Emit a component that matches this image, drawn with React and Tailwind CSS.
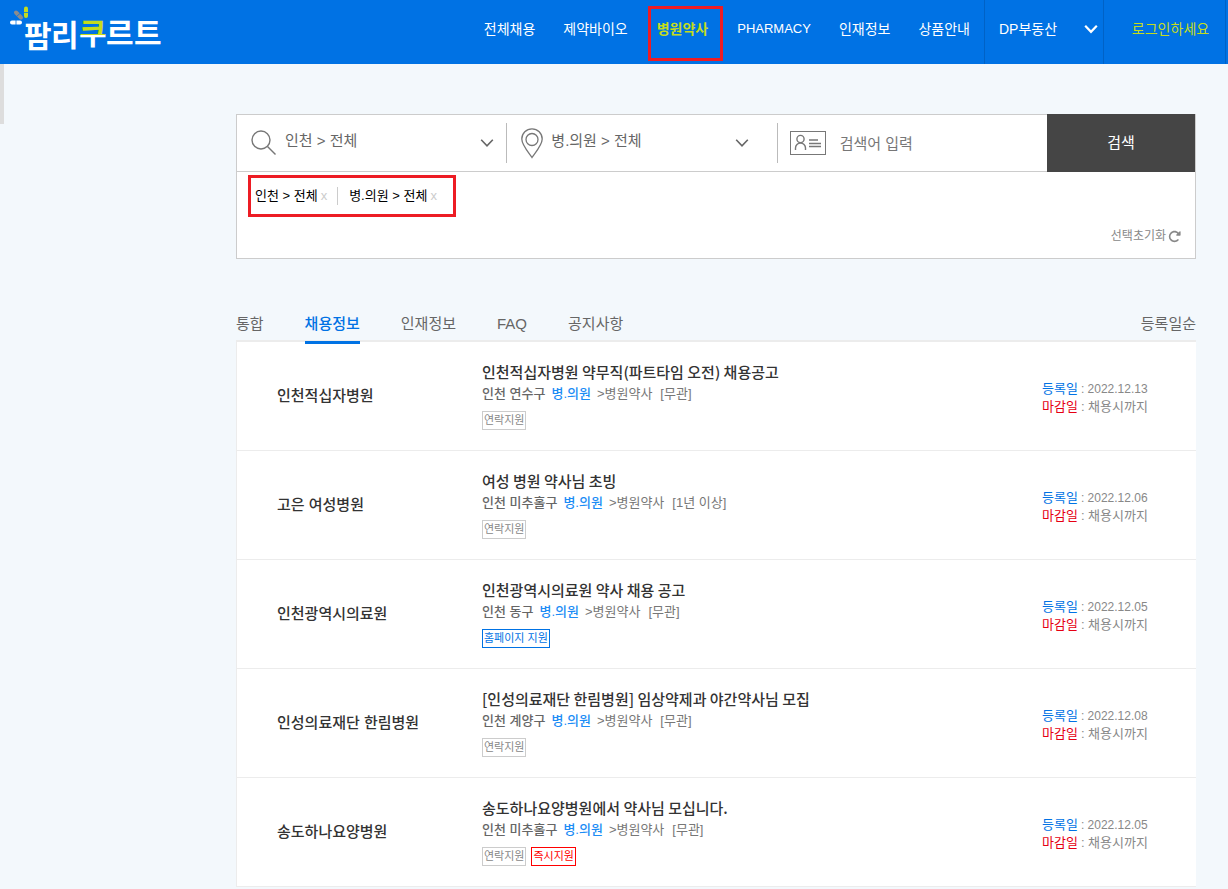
import { useState } from "react";
import { FaRotateRight } from "react-icons/fa6";

const menus = ["전체채용", "제약바이오", "병원약사", "PHARMACY", "인재정보", "상품안내"];

const tabs = ["통합", "채용정보", "인재정보", "FAQ", "공지사항"];

const jobs = [
  {
    company: "인천적십자병원",
    title: "인천적십자병원 약무직(파트타임 오전) 채용공고",
    area: "인천 연수구",
    career: "[무관]",
    badges: ["연락지원"],
    date: "2022.12.13",
  },
  {
    company: "고은 여성병원",
    title: "여성 병원 약사님 초빙",
    area: "인천 미추홀구",
    career: "[1년 이상]",
    badges: ["연락지원"],
    date: "2022.12.06",
  },
  {
    company: "인천광역시의료원",
    title: "인천광역시의료원 약사 채용 공고",
    area: "인천 동구",
    career: "[무관]",
    badges: ["홈페이지 지원"],
    date: "2022.12.05",
  },
  {
    company: "인성의료재단 한림병원",
    title: "[인성의료재단 한림병원] 임상약제과 야간약사님 모집",
    area: "인천 계양구",
    career: "[무관]",
    badges: ["연락지원"],
    date: "2022.12.08",
  },
  {
    company: "송도하나요양병원",
    title: "송도하나요양병원에서 약사님 모십니다.",
    area: "인천 미추홀구",
    career: "[무관]",
    badges: ["연락지원", "즉시지원"],
    date: "2022.12.05",
  },
];

const badgeColors = {
  연락지원: "border-[#ccc] text-[#888]",
  "홈페이지 지원": "border-[#0072e4] text-[#0072e4]",
  즉시지원: "border-[#f00] text-[#f00]",
};

const Chevron = ({ className, strokeWidth = 1.6 }) => (
  <svg className={className} width="14" height="10" viewBox="0 0 14 10" fill="none" stroke="currentColor" strokeWidth={strokeWidth}>
    <path d="M1.2 1.8 7 7.8l5.8-6" />
  </svg>
);

const Logo = () => (
  <svg className="overflow-visible" width="156" height="64" viewBox="0 0 156 64" aria-label="팜리쿠르트">
    <defs>
      <linearGradient id="ku" gradientUnits="userSpaceOnUse" x1="0" y1="0" x2="0" y2="50">
        <stop offset="0.69" stopColor="#c4dc1c" />
        <stop offset="0.69" stopColor="#fff" />
      </linearGradient>
    </defs>
    {/* capsules */}
    <g strokeLinecap="round" strokeWidth="4">
      <path d="M2 22.5h8" stroke="#fff" />
      <path d="m6 12.500 5 5" stroke="#8c8c8c" />
      <path d="M16 8.500v7.500" stroke="#c4dc1c" />
    </g>
    <path d="M6 20v5M13.500 12.500h5M6.500 16.500l4-3.500" stroke="#0072e4" strokeWidth="0.8" />
    <g fontSize="30" fontWeight="700" fill="#fff" fontFamily="'Noto Sans CJK KR', sans-serif">
      <text x="14" y="47">팜</text>
      <text x="41" y="46">리</text>
      <text x="69" y="44" fill="url(#ku)">쿠</text>
      <text x="96" y="44">르</text>
      <text x="124" y="44">트</text>
    </g>
  </svg>
);

const Header = () => (
  <header className="flex h-16 items-stretch bg-[#0072e4] text-sm text-white">
    <a href="#" className="ml-[10px] shrink-0">
      <Logo />
    </a>
    <nav className="ml-auto flex">
      {menus.map((menu) =>
        menu === "병원약사" ? (
          <a key={menu} href="#" className="relative flex items-center px-[15px] pb-[6px] font-bold text-[#c4dc1c]">
            {menu}
            <span className="absolute top-[6px] right-0 bottom-[3px] left-[6px] border-3 border-[#ed1c24]" />
          </a>
        ) : (
          <a key={menu} href="#" className={`flex items-center px-[14px] pb-[6px] ${menu === "PHARMACY" ? "text-[13px]" : ""}`}>
            {menu}
          </a>
        )
      )}
    </nav>
    <button className="flex w-[120px] items-center justify-between border-x border-[#0062c6] pr-[5px] pb-[6px] pl-[14px]">
      DP부동산
      <Chevron strokeWidth={2.2} />
    </button>
    <a href="#" className="mr-0.5 flex w-[122px] items-center justify-center border-r border-[#0062c6] pb-[6px] pl-3 text-[#c4dc1c]">
      로그인하세요
    </a>
  </header>
);

const SearchBox = () => {
  const [keyword, setKeyword] = useState("");

  return (
    <form className="border border-[#ccc] bg-white" onSubmit={(e) => e.preventDefault()}>
      <div className="flex h-[57px] items-stretch border-b border-[#ccc] text-[15px] text-[#666]">
        <label className="relative my-2 flex flex-1 items-center border-r border-[#bbb]">
          <svg className="ml-[14px] shrink-0" width="26" height="26" viewBox="0 0 26 26" fill="none" stroke="#777" strokeWidth="1.4">
            <circle cx="10" cy="10" r="9" />
            <path d="m16.500 16.500 8 8" />
          </svg>
          <select aria-label="지역" className="h-full w-full appearance-none pb-1 pl-2 outline-none">
            <option>인천 &gt; 전체</option>
          </select>
          <Chevron className="pointer-events-none absolute right-3" />
        </label>
        <label className="relative my-2 flex flex-1 items-center border-r border-[#bbb]">
          <svg className="ml-[14px] shrink-0" width="22" height="32" viewBox="0 0 22 32" fill="none" stroke="#777" strokeWidth="1.3">
            <path d="M11 30.500C8 26 .8 18 .8 12a10.200 10.200 0 0 1 20.400 0c0 6-7.200 14-10.200 18.500Z" />
            <circle cx="11" cy="12.500" r="6" />
          </svg>
          <select aria-label="분류" className="h-full w-full appearance-none pb-1 pl-2 outline-none">
            <option>병.의원 &gt; 전체</option>
          </select>
          <Chevron className="pointer-events-none absolute right-7" />
        </label>
        <label className="flex flex-1 items-center">
          <svg className="ml-3 shrink-0" width="36" height="24" viewBox="0 0 36 24" fill="none" stroke="#777">
            <rect x="0.5" y="0.5" width="35" height="23" />
            <g strokeWidth="1.4">
              <circle cx="10.500" cy="8" r="3.600" />
              <path d="M5.500 19v-2a5 5 0 0 1 10 0v2" />
              <path d="M19 9h9M19 12.500h12M19 15.500h12" />
            </g>
          </svg>
          <input
            aria-label="검색어"
            value={keyword}
            onChange={(e) => setKeyword(e.target.value)}
            placeholder="검색어 입력"
            className="h-full w-full min-w-0 pl-[14px] outline-none placeholder:text-[#777]"
          />
        </label>
        <button className="-mt-px -mb-px w-[148px] bg-[#454545] text-white">검색</button>
      </div>
      <div className="flex min-h-[86px] flex-wrap items-start justify-between">
        <div className="mt-[3px] ml-[11px] flex h-[42px] items-center border-3 border-[#ed1c24] pr-4 pl-1 text-[13px] text-black">
          <span>인천 &gt; 전체</span>
          <button type="button" aria-label="인천 삭제" className="ml-[3px] text-[#ccc]">x</button>
          <span className="mr-[11px] ml-[10px] h-[18px] w-px bg-[#ccc]" />
          <span>병.의원 &gt; 전체</span>
          <button type="button" aria-label="병.의원 삭제" className="ml-[3px] text-[#ccc]">x</button>
        </div>
        <button type="button" className="mr-[14px] mb-[14px] flex items-center gap-[2px] self-end text-xs text-[#888]">
          선택초기화
          <FaRotateRight size={13} />
        </button>
      </div>
    </form>
  );
};

const JobRow = ({ job }) => (
  <li className="flex items-center border-b border-[#ececec] pt-[19px] pb-5">
    <a href="#" className="w-[245px] shrink-0 pt-[2px] pl-10 text-[15px] font-medium text-[#333]">
      {job.company}
    </a>
    <div className="min-w-0 flex-1">
      <a href="#" className="block font-['Noto_Sans_CJK_KR',sans-serif] text-[15px] leading-[22px] font-medium text-[#333]">
        {job.title}
      </a>
      <p className="flex text-[13px] leading-[22px] text-[#777]">
        <span className="font-medium text-[#666]">{job.area}</span>
        <span className="ml-[6px] font-medium text-[#1c8cf5]">병.의원</span>
        <span className="ml-[6px]">&gt;병원약사</span>
        <span className="ml-2">{job.career}</span>
      </p>
      <div className="mt-[6px] flex gap-[5px]">
        {job.badges.map((badge) => (
          <span key={badge} className={`flex h-[19px] items-center border px-px text-[11px] ${badgeColors[badge]}`}>
            {badge}
          </span>
        ))}
      </div>
    </div>
    <dl className="w-[154px] shrink-0 pt-1 text-[13px] leading-[18px] text-[#888]">
      <div className="flex gap-[3px]">
        <dt className="text-[#0072e4]">등록일</dt>
        <dd className="font-['Liberation_Sans',sans-serif] text-xs leading-[18px]">: {job.date}</dd>
      </div>
      <div className="flex gap-[3px]">
        <dt className="text-[#e60012]">마감일</dt>
        <dd>: 채용시까지</dd>
      </div>
    </dl>
  </li>
);

const App = () => {
  const [activeTab, setActiveTab] = useState("채용정보");

  return (
    <div className="min-h-screen bg-[#f3f8fc] font-['Liberation_Sans','Noto_Sans_CJK_KR',sans-serif]">
      <Header />
      <div className="flex">
        <div className="h-[60px] w-1 shrink-0 bg-[#ddd]" />
        <main className="min-w-0 flex-1 pt-[50px] pr-8 pl-[232px]">
          <SearchBox />
          <div className="relative z-10 mt-[53px] -mb-1 flex items-start justify-between text-[15px] leading-6 text-[#666]">
            <div className="flex gap-[41px]">
              {tabs.map((tab) => (
                <button
                  key={tab}
                  onClick={() => setActiveTab(tab)}
                  className={`border-b-3 pb-[5px] ${
                    tab === activeTab ? "border-[#0072e4] font-medium text-[#0072e4]" : "border-transparent"
                  }`}
                >
                  {tab}
                </button>
              ))}
            </div>
            <button>등록일순</button>
          </div>
          <ul className="border-t-2 border-l border-[#ececec] bg-white">
            {jobs.map((job) => (
              <JobRow key={job.company} job={job} />
            ))}
          </ul>
        </main>
      </div>
    </div>
  );
};

export default App;
